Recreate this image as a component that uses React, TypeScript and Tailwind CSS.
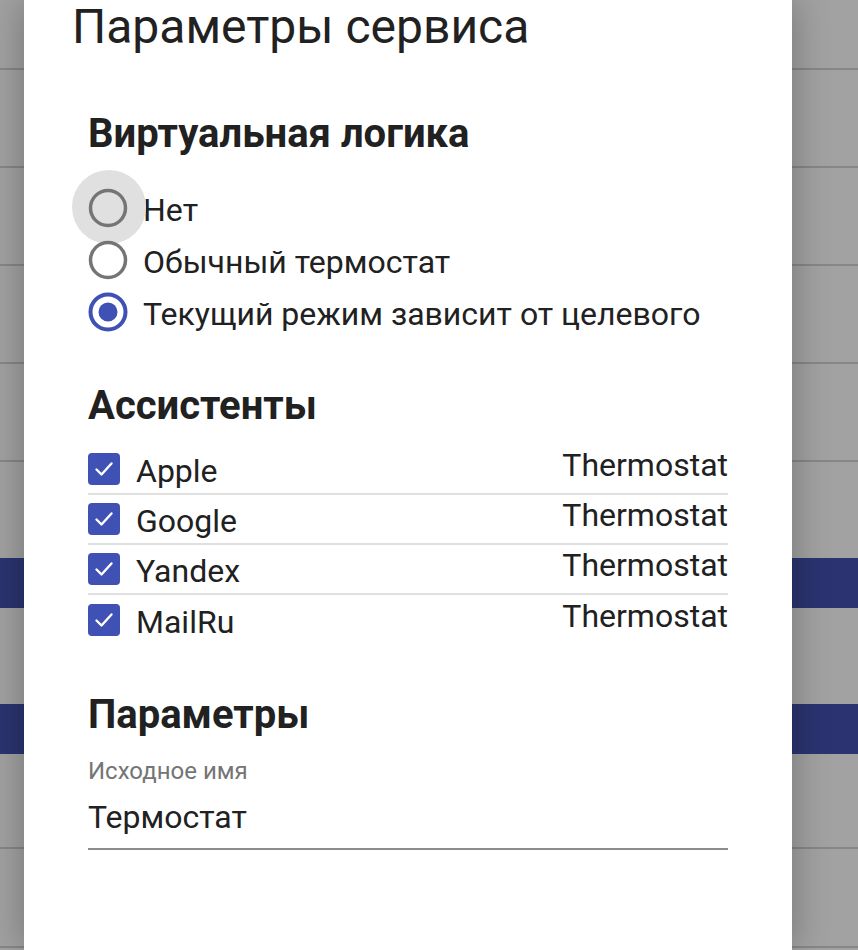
import React from "react";

const font = { fontFamily: "Roboto, 'Noto Sans', sans-serif" };

// backdrop rows behind the modal: [height, kind]
const backdrop: [number, "gray" | "line" | "blue"][] = [
  [68, "gray"], [2, "line"],
  [96, "gray"], [2, "line"],
  [96, "gray"], [2, "line"],
  [96, "gray"], [2, "line"],
  [96, "gray"], [2, "line"],
  [96, "gray"], [50, "blue"],
  [96, "gray"], [50, "blue"],
  [93, "gray"], [2, "line"],
  [97, "gray"], [2, "line"],
  [4, "gray"],
];

const assistants = ["Apple", "Google", "Yandex", "MailRu"];
const modes = ["Нет", "Обычный термостат", "Текущий режим зависит от целевого"];

const Radio = ({ checked, hover }: { checked: boolean; hover?: boolean }) => (
  <div className="relative w-[40px] h-[40px] shrink-0">
    {hover && <div className="absolute -left-[16px] -top-[18px] w-[74px] h-[74px] rounded-full bg-[#e0e0e0]" />}
    <svg className="relative" width="40" height="40" viewBox="0 0 40 40">
      {checked ? (
        <>
          <circle cx="20" cy="20" r="17.5" fill="none" stroke="#3f51b5" strokeWidth="4" />
          <circle cx="20" cy="20" r="9.5" fill="#3f51b5" />
        </>
      ) : (
        <circle cx="20" cy="20" r="17.5" fill="none" stroke="#757575" strokeWidth="3.5" />
      )}
    </svg>
  </div>
);

const Check = () => (
  <div className="w-[32px] h-[32px] rounded-[4px] bg-[#3f51b5] flex items-center justify-center shrink-0">
    <svg width="22" height="22" viewBox="0 0 22 22">
      <polyline points="3.5,11.5 8.5,16.5 18.5,5.5" fill="none" stroke="#ffffff" strokeWidth="2.4" strokeLinecap="round" strokeLinejoin="round" />
    </svg>
  </div>
);

export default function App() {
  return (
    <div className="relative w-[858px] h-[950px] overflow-hidden" style={font}>
      <div className="flex flex-col">
        {backdrop.map(([h, kind], i) => (
          <div
            key={i}
            style={{ height: h }}
            className={kind === "blue" ? "bg-[#2b3470]" : kind === "line" ? "bg-[#878787]" : "bg-[#a2a2a2]"}
          />
        ))}
      </div>

      <div className="absolute left-[24px] top-0 w-[768px] h-[950px] bg-white shadow-[0_0_36px_rgba(0,0,0,0.3)] flex flex-col text-[#212121]">
        <div className="pl-[48px] mt-[3px] text-[48px] leading-none">Параметры сервиса</div>

        <div className="px-[64px] flex flex-col">
          <div className="mt-[63px] text-[40px] leading-none font-bold">Виртуальная логика</div>
          <div className="mt-[28px] flex flex-col">
            {modes.map((m, i) => (
              <div key={m} className="h-[52px] flex items-center gap-[15px]">
                <Radio checked={i === 2} hover={i === 0} />
                <span className="text-[32px] leading-none pt-[3px]">{m}</span>
              </div>
            ))}
          </div>

          <div className="mt-[48px] text-[40px] leading-none font-bold">Ассистенты</div>
          <div className="mt-[19px] flex flex-col">
            {assistants.map((a, i) => (
              <div
                key={a}
                className={`h-[50px] flex items-center ${i < assistants.length - 1 ? "border-b-2 border-[#e0e0e0]" : ""}`}
              >
                <Check />
                <span className="ml-[16px] text-[32px] leading-none pt-[3px]">{a}</span>
                <span className="ml-auto text-[32px] leading-none pb-[8px]">Thermostat</span>
              </div>
            ))}
          </div>

          <div className="mt-[50px] text-[40px] leading-none font-bold">Параметры</div>
          <div className="mt-[24px] text-[24px] leading-none text-[#757575]">Исходное имя</div>
          <div className="mt-[18px] pb-[15px] border-b-2 border-[#8c8c8c] text-[32px] leading-none">Термостат</div>
        </div>
      </div>
    </div>
  );
}
